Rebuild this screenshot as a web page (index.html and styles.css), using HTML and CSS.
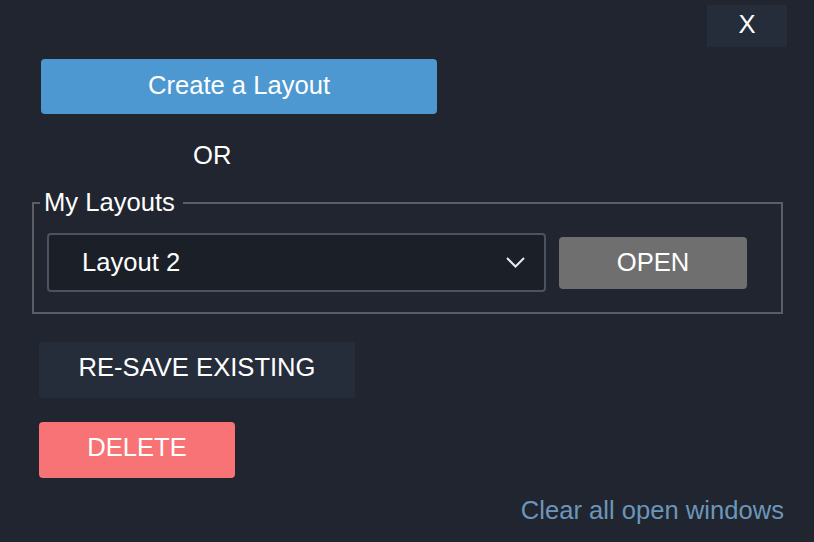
FILE: index.html
```html
<!DOCTYPE html>
<html lang="en">
<head>
  <meta charset="UTF-8">
  <meta name="viewport" content="width=device-width, initial-scale=1.0">
  <title>Layouts</title>
  <link rel="stylesheet" href="styles.css">
</head>
<body>
  <div class="panel">
    <div class="topBar">
      <button class="closeBtn">X</button>
    </div>
    <button class="btn createBtn">Create a Layout</button>
    <div class="orText">OR</div>
    <fieldset class="layoutBox">
      <legend>My Layouts</legend>
      <div class="layoutRow">
        <div class="selectBox">
          <span>Layout 2</span>
          <svg width="19" height="11" viewBox="0 0 19 11"><path d="M1 1 L9.5 9.5 L18 1" fill="none" stroke="#e8eaee" stroke-width="2"/></svg>
        </div>
        <button class="btn openBtn">OPEN</button>
      </div>
    </fieldset>
    <button class="btn resaveBtn">RE-SAVE EXISTING</button>
    <button class="btn deleteBtn">DELETE</button>
    <div class="footer">
      <a class="clearLink" href="#">Clear all open windows</a>
    </div>
  </div>
</body>
</html>
```

FILE: styles.css
```css
body { margin: 0; background: #20252f; font-family: 'Liberation Sans', Arial, sans-serif; font-size: 25.6px; color: #fff; }
.panel { display: flex; flex-direction: column; align-items: flex-start; padding: 5px 27px 0 32px; }
.topBar { align-self: stretch; display: flex; justify-content: flex-end; }
.btn { font-family: inherit; font-size: 25.6px; line-height: 30px; color: #fff; border: none; border-radius: 4px; cursor: pointer; padding: 0; }
.closeBtn { width: 80px; height: 42px; background: #262d3a; color: #fff; border: none; font-family: inherit; font-size: 25.6px; padding: 0 0 3px 0; }
.createBtn { margin: 12px 0 0 9px; width: 396px; height: 55px; background: #4e98d2; padding-bottom: 3px; }
.orText { margin: 26px 0 0 161px; line-height: 30px; }
.layoutBox { align-self: stretch; margin: 18px 4px 0 0; padding: 15px 33px 20px 13px; border: 2px solid #5b5e64; }
.layoutBox legend { margin-left: -7px; padding: 0 8px 0 4px; line-height: 30px; position: relative; top: -1px; }
.layoutRow { display: flex; align-items: center; gap: 13px; }
.selectBox { box-sizing: border-box; width: 499px; height: 59px; border: 2px solid #4a5362; border-radius: 4px; background: #1b1f28; display: flex; align-items: center; justify-content: space-between; padding: 0 19px 0 33px; }
.openBtn { width: 188px; height: 52px; background: #6f6f6f; padding-bottom: 2px; }
.resaveBtn { margin: 28px 0 0 7px; width: 316px; height: 56px; background: #262d3a; border-radius: 2px; padding-bottom: 6px; }
.deleteBtn { margin: 24px 0 0 7px; width: 196px; height: 56px; background: #f77375; padding-bottom: 6px; }
.footer { align-self: stretch; display: flex; justify-content: flex-end; margin-top: 17px; padding-right: 3px; }
.clearLink { color: #6b96ba; text-decoration: none; line-height: 30px; }
```
